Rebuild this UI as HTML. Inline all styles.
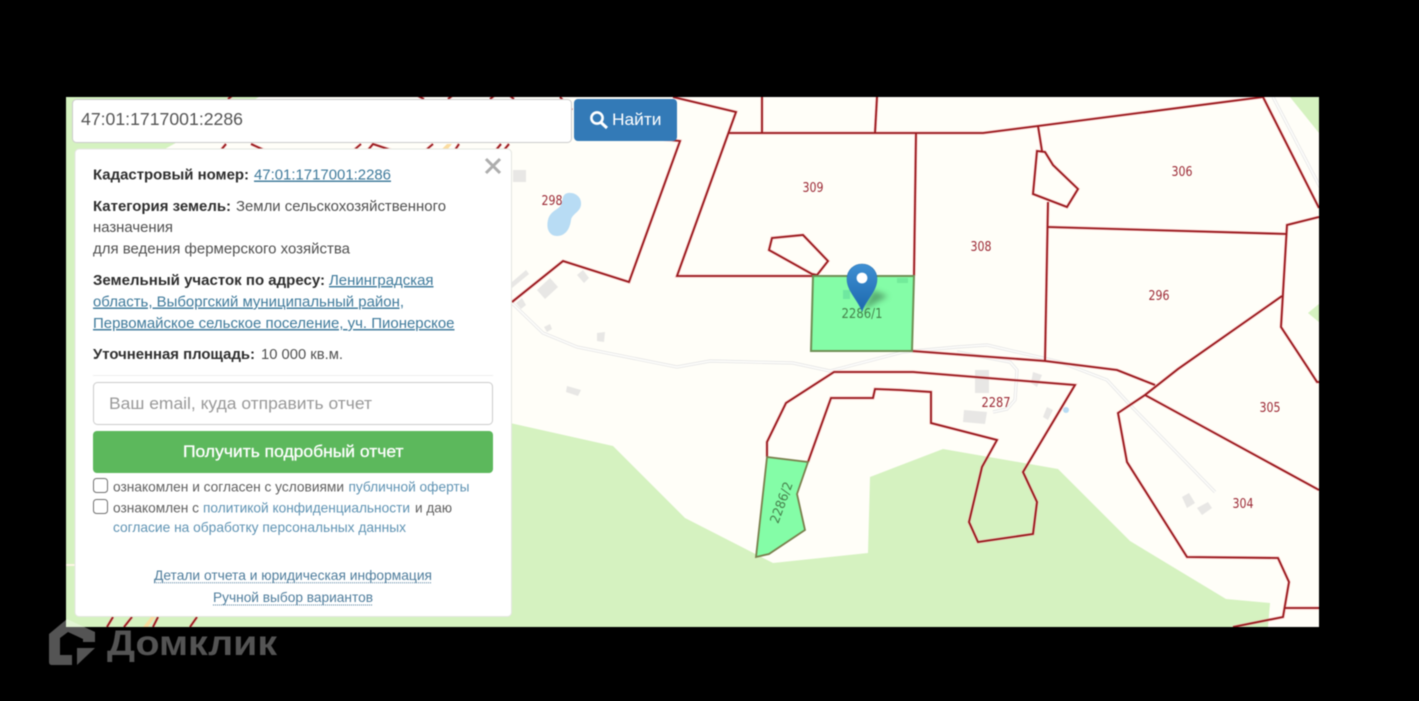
<!DOCTYPE html>
<html lang="ru">
<head>
<meta charset="utf-8">
<title>Кадастровый номер</title>
<style>
html,body{margin:0;padding:0;background:#000;width:1419px;height:701px;overflow:hidden}
svg{display:block;filter:blur(.5px)}
text{font-family:"Liberation Sans",sans-serif}
.b{font-weight:700;fill:#2e2e2e;font-size:14.5px}
.t{fill:#505050;font-size:14.5px}
.l{fill:#3f7a9b;font-size:14.5px;text-decoration:underline}
.c{fill:#606060;font-size:14px}
.k{fill:#5f93b3;font-size:14px}
.d{fill:#4f7d9c;font-size:14px}
.m{font-family:"DejaVu Sans",sans-serif;font-size:13px;fill:#9c2a36;text-anchor:middle}
.g{fill:#46824c}
</style>
</head>
<body>
<svg width="1419" height="701" viewBox="0 0 1419 701" xmlns="http://www.w3.org/2000/svg">
<defs>
<clipPath id="map"><rect x="66" y="97" width="1253" height="530"/></clipPath>
<filter id="soft" x="-50%" y="-50%" width="200%" height="200%"><feGaussianBlur stdDeviation="3"/></filter>
<g id="lines" fill="none" stroke-linejoin="miter">
  <polyline points="512,302 563,261 629,282 680,141 660,139"/>
  <polyline points="673,97 736,112 677,276 813,276"/>
  <polyline points="728,133 916,133 983,133 1038,126 1263,97 1319,208"/>
  <line x1="762" y1="97" x2="762" y2="133"/>
  <line x1="877" y1="97" x2="875" y2="133"/>
  <line x1="916" y1="133" x2="914" y2="276"/>
  <polygon points="772,238 803,235 828,261 817,275 812,274 769,250"/>
  <polyline points="912,351 1045,361 1117,370 1155,385"/>
  <polyline points="1048,202 1045,361"/>
  <polyline points="1038,126 1042,151"/>
  <polygon points="1037,151 1045,152 1053,165 1078,189 1067,207 1033,194"/>
  <line x1="1048" y1="227" x2="1287" y2="234"/>
  <polyline points="1319,217 1287,225 1281,327 1308,368 1317,382 1319,382"/>
  <polyline points="1282,296 1178,369 1145,395 1118,413 1127,462 1187,557 1278,558 1289,582 1283,617 1233,627"/>
  <line x1="1285" y1="608" x2="1319" y2="608"/>
  <line x1="1145" y1="395" x2="1319" y2="490"/>
  <polyline points="767,457 767,442 786,403 834,372 913,372 1075,385 1023,472 1037,502 1033,534 978,542 969,522 982,467 997,440 931,423 931,392 900,390 875,389 873,398 831,398 808,462"/>
  <line x1="221" y1="150" x2="226" y2="144"/>
  <line x1="251" y1="144" x2="264" y2="150"/>
  <line x1="354" y1="150" x2="361" y2="144"/>
  <polyline points="368,150 373,144 391,150"/>
  <line x1="426" y1="150" x2="433" y2="144"/>
  <line x1="455" y1="150" x2="459" y2="144"/>
  <line x1="496" y1="150" x2="501" y2="144"/>
  <line x1="504" y1="150" x2="509" y2="144"/>
  <line x1="228" y1="99" x2="232" y2="96"/>
  <line x1="418" y1="96" x2="424" y2="99"/>
  <line x1="448" y1="99" x2="452" y2="96"/>
  <line x1="490" y1="99" x2="494" y2="96"/>
  <line x1="510" y1="96" x2="514" y2="99"/>
  <line x1="560" y1="97" x2="572" y2="110"/>
  <line x1="107" y1="627" x2="113" y2="617"/>
  <line x1="124" y1="627" x2="132" y2="617"/>
  <line x1="153" y1="627" x2="158" y2="617"/>
  <line x1="190" y1="627" x2="197" y2="617"/>
</g>
<polyline id="road" fill="none" points="512,303 543,333 577,347 677,367 710,361 793,363 830,371 903,352 957,347 987,345 1060,362 1107,380 1133,408 1215,492"/>
<polyline id="road2" fill="none" points="957,352 1010,362 1017,370 1015,400 1007,409 993,412"/>
<line id="road3" x1="1273" y1="97" x2="1320" y2="187"/>
<linearGradient id="pin" x1="0" y1="0" x2="0" y2="1"><stop offset="0" stop-color="#3f8fd2"/><stop offset="1" stop-color="#1c68ae"/></linearGradient>
</defs>

<rect width="1419" height="701" fill="#000"/>
<g clip-path="url(#map)">
  <rect x="66" y="97" width="1253" height="530" fill="#fffef8"/>
  <polygon fill="#d5f2c0" points="66,97 259,97 163,150 163,423 510,423 613,446 685,518 773,563 868,553 870,477 943,449 1058,469 1130,541 1226,599 1270,603 1268,627 66,627"/>
  <polygon fill="#d5f2c0" points="1290,97 1319,97 1319,133"/>
  <polygon fill="#d5f2c0" points="1308,313 1320,303 1320,323"/>
  <line x1="66" y1="565" x2="75" y2="565" stroke="#fff6e6" stroke-width="2"/>
  <polygon fill="#fbdca0" points="143,627 151,617 155,617 148,627"/>
  <polygon fill="#fbdca0" points="441,150 447,144 452,144 447,150"/>

  <g stroke="#e6e6e6" stroke-width="3.2"><use href="#road"/><use href="#road2"/><use href="#road3"/></g>
  <g stroke="#fdfdfb" stroke-width="1.6"><use href="#road"/><use href="#road2"/><use href="#road3"/></g>

  <g fill="#e8e7e5">
    <rect x="513" y="170" width="13" height="12"/>
    <polygon points="512,282 526,270 529,274 512,288"/>
    <polygon points="537,290 550,278 558,287 545,299"/>
    <polygon points="577,275 583,270 589,278 584,283"/>
    <polygon points="516,303 522,298 526,305 521,309"/>
    <polygon points="544,327 550,324 552,329 547,332"/>
    <polygon points="597,333 605,332 604,342 597,341"/>
    <polygon points="567,386 581,390 578,396 566,392"/>
    <rect x="975" y="370" width="14" height="23"/>
    <polygon points="964,410 987,412 985,424 963,422"/>
    <polygon points="1033,372 1042,375 1037,387 1031,383"/>
    <polygon points="1047,407 1053,410 1048,420 1043,417"/>
    <polygon points="1182,497 1189,493 1195,503 1187,508"/>
    <polygon points="1197,508 1208,502 1212,508 1202,515"/>
  </g>
  <path fill="#b8dcf4" d="M568 193C576 192 582 198 581 205C580 212 572 214 571 220C570 228 566 236 557 236C549 236 546 228 548 220C550 211 558 210 561 205C563 200 562 194 568 193Z"/>
  <circle cx="1066" cy="410" r="3" fill="#b8dcf4"/>

  <use href="#lines" stroke="#f6b0b0" stroke-width="3.4" opacity=".5"/>
  <use href="#lines" stroke="#98161b" stroke-width="1.8"/>

  <polygon points="813,276 914,276 912,351 811,351" fill="#84fda7" stroke="#6f8f55" stroke-width="2"/>
  <polygon points="767,457 808,462 797,494 805,530 769,554 756,557" fill="#84fda7" stroke="#7a7f4c" stroke-width="1.8"/>
  <rect x="843" y="290" width="7" height="9" fill="#6fe8a0"/>
  <rect x="897" y="278" width="11" height="5" fill="#72eb9a"/>

  <text class="m" x="552" y="205" textLength="21" lengthAdjust="spacingAndGlyphs">298</text>
  <text class="m" x="813" y="192" textLength="21" lengthAdjust="spacingAndGlyphs">309</text>
  <text class="m" x="1182" y="176" textLength="21" lengthAdjust="spacingAndGlyphs">306</text>
  <text class="m" x="981" y="251" textLength="21" lengthAdjust="spacingAndGlyphs">308</text>
  <text class="m" x="1159" y="300" textLength="21" lengthAdjust="spacingAndGlyphs">296</text>
  <text class="m" x="1270" y="412" textLength="21" lengthAdjust="spacingAndGlyphs">305</text>
  <text class="m" x="1243" y="508" textLength="21" lengthAdjust="spacingAndGlyphs">304</text>
  <text class="m" x="996" y="407" textLength="29" lengthAdjust="spacingAndGlyphs">2287</text>
  <text class="m g" x="862" y="318" textLength="41" lengthAdjust="spacingAndGlyphs">2286/1</text>
  <text class="m g" transform="translate(785.5,504) rotate(-70)" textLength="43" lengthAdjust="spacingAndGlyphs">2286/2</text>

  <polygon points="862,311 873,290 888,296 874,304" fill="#2f5f3c" opacity=".5" filter="url(#soft)"/>
</g>

<!-- pin -->
<path d="M862 311C858 300 847 291 847 279C847 270 854 264 862 264C870 264 877 270 877 279C877 291 866 300 862 311Z" fill="url(#pin)" stroke="#2d77b6" stroke-width=".6"/>
<circle cx="862" cy="278" r="5.4" fill="#fff"/>

<!-- search input -->
<rect x="72.5" y="99.5" width="499" height="43" rx="4" fill="#fff" stroke="#ccc"/>
<text x="81" y="125" font-size="17.6" fill="#555" textLength="162" lengthAdjust="spacingAndGlyphs">47:01:1717001:2286</text>

<!-- search button -->
<rect x="574" y="99" width="103" height="42" rx="4" fill="#337ab7"/>
<circle cx="597" cy="118" r="5.6" fill="none" stroke="#fff" stroke-width="2.6"/>
<line x1="601" y1="122.5" x2="607" y2="128" stroke="#fff" stroke-width="3"/>
<text x="612" y="125" font-size="17" fill="#fff" textLength="49.5" lengthAdjust="spacingAndGlyphs">Найти</text>

<!-- panel -->
<rect x="75" y="149" width="436.5" height="467.5" rx="4" fill="#fff" stroke="#e4e6e0"/>
<path d="M486 159L500 173M500 159L486 173" stroke="#adadad" stroke-width="3" fill="none"/>

<text class="b" x="93" y="179.5" textLength="156" lengthAdjust="spacingAndGlyphs">Кадастровый номер:</text>
<text class="l" x="254" y="179.5" textLength="137" lengthAdjust="spacingAndGlyphs">47:01:1717001:2286</text>
<text class="b" x="93" y="211" textLength="138" lengthAdjust="spacingAndGlyphs">Категория земель:</text>
<text class="t" x="236" y="211" textLength="210" lengthAdjust="spacingAndGlyphs">Земли сельскохозяйственного</text>
<text class="t" x="93" y="232" textLength="80" lengthAdjust="spacingAndGlyphs">назначения</text>
<text class="t" x="93" y="253.5" textLength="257" lengthAdjust="spacingAndGlyphs">для ведения фермерского хозяйства</text>
<text class="b" x="93" y="285" textLength="232" lengthAdjust="spacingAndGlyphs">Земельный участок по адресу:</text>
<text class="l" x="329" y="285" textLength="104.5" lengthAdjust="spacingAndGlyphs">Ленинградская</text>
<text class="l" x="93" y="306.5" textLength="311" lengthAdjust="spacingAndGlyphs">область, Выборгский муниципальный район,</text>
<text class="l" x="93" y="328" textLength="361.5" lengthAdjust="spacingAndGlyphs">Первомайское сельское поселение, уч. Пионерское</text>
<text class="b" x="93" y="359" textLength="162" lengthAdjust="spacingAndGlyphs">Уточненная площадь:</text>
<text class="t" x="261" y="359" textLength="82" lengthAdjust="spacingAndGlyphs">10 000 кв.м.</text>
<line x1="93" y1="375.5" x2="493" y2="375.5" stroke="#eee"/>

<rect x="93.5" y="382.5" width="399" height="42" rx="4" fill="#fff" stroke="#ccc"/>
<text x="109" y="409" font-size="17" fill="#999" textLength="263" lengthAdjust="spacingAndGlyphs">Ваш email, куда отправить отчет</text>

<rect x="93" y="431" width="400" height="42" rx="4" fill="#5cb85c"/>
<text x="183" y="457" font-size="17" fill="#fff" stroke="#fff" stroke-width=".3" textLength="220.5" lengthAdjust="spacingAndGlyphs">Получить подробный отчет</text>

<rect x="93.5" y="478.5" width="14" height="14" rx="3" fill="#fff" stroke="#707070"/>
<text class="c" x="113" y="491.5" textLength="231" lengthAdjust="spacingAndGlyphs">ознакомлен и согласен с условиями</text>
<text class="k" x="348.5" y="491.5" textLength="121" lengthAdjust="spacingAndGlyphs">публичной оферты</text>
<rect x="93.5" y="499.5" width="14" height="14" rx="3" fill="#fff" stroke="#707070"/>
<text class="c" x="113" y="512.5" textLength="86" lengthAdjust="spacingAndGlyphs">ознакомлен с</text>
<text class="k" x="203" y="512.5" textLength="207" lengthAdjust="spacingAndGlyphs">политикой конфиденциальности</text>
<text class="c" x="415" y="512.5" textLength="37" lengthAdjust="spacingAndGlyphs">и даю</text>
<text class="k" x="113" y="532" textLength="293" lengthAdjust="spacingAndGlyphs">согласие на обработку персональных данных</text>

<text class="d" x="154" y="580" textLength="278" lengthAdjust="spacingAndGlyphs">Детали отчета и юридическая информация</text>
<line x1="154" y1="582.8" x2="432" y2="582.8" stroke="#4f7d9c" stroke-dasharray="1 1"/>
<text class="d" x="213" y="602" textLength="160" lengthAdjust="spacingAndGlyphs">Ручной выбор вариантов</text>
<line x1="213" y1="605" x2="373" y2="605" stroke="#4f7d9c" stroke-dasharray="1 1"/>

<!-- logo -->
<g fill="#fff" fill-opacity=".33">
  <path d="M49 634V662Q49 665 52 665H72V655H60V638L68 632L83 639V642H95V632L67 619Z"/>
  <path d="M77 648H95L77 665Z"/>
</g>
<text x="107" y="655" font-size="35" font-weight="700" fill="#fff" fill-opacity=".33" textLength="170" lengthAdjust="spacingAndGlyphs">Домклик</text>
</svg>
</body>
</html>
